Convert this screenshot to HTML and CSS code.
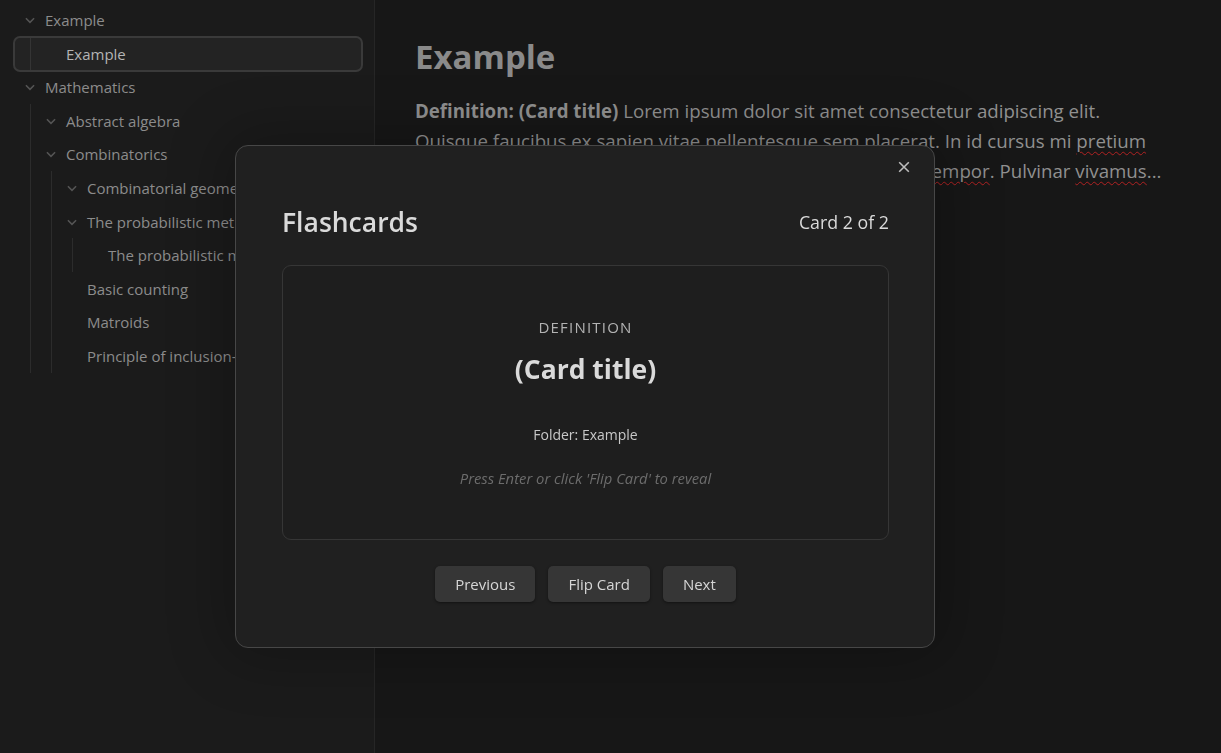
FILE: index.html
```html
<!DOCTYPE html>
<html lang="en">
<head>
<meta charset="utf-8">
<title>Flashcards</title>
<link rel="stylesheet" href="styles.css">
</head>
<body>
<div class="app">
  <aside class="sidebar">
    <div class="tree">
      <div class="row"><span class="chev"><svg viewBox="0 0 12 12"><path d="M2.5 4.5 L6 8 L9.5 4.5"/></svg></span><span class="label">Example</span></div>
      <div class="children">
        <div class="row leaf selected"><span class="label">Example</span></div>
      </div>
      <div class="row"><span class="chev"><svg viewBox="0 0 12 12"><path d="M2.5 4.5 L6 8 L9.5 4.5"/></svg></span><span class="label">Mathematics</span></div>
      <div class="children">
        <div class="row"><span class="chev"><svg viewBox="0 0 12 12"><path d="M2.5 4.5 L6 8 L9.5 4.5"/></svg></span><span class="label">Abstract algebra</span></div>
        <div class="row"><span class="chev"><svg viewBox="0 0 12 12"><path d="M2.5 4.5 L6 8 L9.5 4.5"/></svg></span><span class="label">Combinatorics</span></div>
        <div class="children">
          <div class="row"><span class="chev"><svg viewBox="0 0 12 12"><path d="M2.5 4.5 L6 8 L9.5 4.5"/></svg></span><span class="label">Combinatorial geometry</span></div>
          <div class="row"><span class="chev"><svg viewBox="0 0 12 12"><path d="M2.5 4.5 L6 8 L9.5 4.5"/></svg></span><span class="label">The probabilistic method</span></div>
          <div class="children">
            <div class="row leaf"><span class="label">The probabilistic method</span></div>
          </div>
          <div class="row leaf"><span class="label">Basic counting</span></div>
          <div class="row leaf"><span class="label">Matroids</span></div>
          <div class="row leaf"><span class="label">Principle of inclusion-exclusion</span></div>
        </div>
      </div>
    </div>
  </aside>
  <main class="content">
    <h1 class="title">Example</h1>
    <p class="para"><b>Definition: (Card title)</b> Lorem ipsum dolor sit amet consectetur adipiscing elit.<br>Quisque faucibus ex sapien vitae pellentesque sem placerat. In id cursus mi <span class="typo">pretium</span><br>tellus duis convallis. Tempus leo eu aenean sed diam urna <span class="typo">tempor</span>. Pulvinar <span class="typo">vivamus</span>...</p>
  </main>
</div>

<div class="modal">
  <button class="close" aria-label="Close"><svg viewBox="0 0 16 16"><path d="M2.5 2.5 L13.5 13.5 M13.5 2.5 L2.5 13.5"/></svg></button>
  <div class="modal-head">
    <h2 class="modal-title">Flashcards</h2>
    <span class="counter">Card 2 of 2</span>
  </div>
  <div class="card">
    <div class="kind">DEFINITION</div>
    <div class="card-title">(Card title)</div>
    <div class="folder">Folder: Example</div>
    <div class="hint">Press Enter or click 'Flip Card' to reveal</div>
  </div>
  <div class="actions">
    <button class="btn">Previous</button>
    <button class="btn">Flip Card</button>
    <button class="btn">Next</button>
  </div>
</div>
</body>
</html>
```

FILE: styles.css
```css
html, body {
  margin: 0;
  padding: 0;
  height: 100%;
  overflow: hidden;
}
body {
  font-family: "Open Sans", "Noto Sans", sans-serif;
  background: #171717;
}
.app {
  display: flex;
  height: 753px;
}
.sidebar {
  width: 375px;
  flex: none;
  background: #1b1b1b;
  border-right: 1px solid #262626;
  padding: 3.5px 13px 0 0;
  box-sizing: border-box;
}
.tree {
  display: flex;
  flex-direction: column;
}
.row {
  height: 33.55px;
  display: flex;
  align-items: center;
  color: #8c8c8c;
  font-size: 15px;
  white-space: nowrap;
  position: relative;
  margin-left: 20px;
}
.children .row { margin-left: 0; }
.chev {
  width: 20px;
  height: 20px;
  flex: none;
  display: flex;
  align-items: center;
  justify-content: center;
  margin-right: 5px;
}
.chev svg {
  width: 14px;
  height: 14px;
  fill: none;
  stroke: #555;
  stroke-width: 1.3;
}
.leaf { padding-left: 25px; }
.children {
  margin-left: 30px;
  border-left: 1px solid #2c2c2c;
  padding-left: 10px;
  display: flex;
  flex-direction: column;
}
.children .children { margin-left: 10px; }
.selected { color: #b4b4b4; }
.selected::before {
  content: "";
  position: absolute;
  left: -28px;
  right: -2px;
  top: -1px;
  bottom: -1px;
  border: 2px solid #3a3a3a;
  border-radius: 7px;
  background: rgba(255,255,255,0.04);
}
.label { position: relative; }
.content {
  flex: 1;
  background: #171717;
  padding: 35px 40px;
}
.title {
  margin: 0 0 17px;
  font-size: 33px;
  font-weight: 700;
  color: #8a8a8a;
  line-height: 44px;
}
.para {
  margin: 0;
  font-size: 18.7px;
  line-height: 30px;
  color: #909090;
  white-space: nowrap;
}
.para b { color: #909090; font-weight: 700; }
.typo {
  text-decoration: underline wavy #b02222;
  text-decoration-thickness: 1px;
  text-underline-offset: 3px;
}
.modal {
  position: fixed;
  left: 235px;
  top: 145px;
  width: 700px;
  height: 503px;
  box-sizing: border-box;
  background: #202020;
  border: 1px solid #474747;
  border-radius: 13px;
  box-shadow: 0 0 60px 10px rgba(0,0,0,0.24);
  padding: 58px 45px 0 46px;
  display: flex;
  flex-direction: column;
}
.close {
  position: absolute;
  top: 10px;
  right: 19px;
  width: 22px;
  height: 22px;
  padding: 0;
  border: 0;
  background: transparent;
  display: flex;
  align-items: center;
  justify-content: center;
}
.close svg {
  width: 14px;
  height: 14px;
  fill: none;
  stroke: #bdbdbd;
  stroke-width: 1.8;
}
.modal-head {
  display: flex;
  justify-content: space-between;
  align-items: center;
  height: 36px;
}
.modal-title {
  margin: 0;
  font-size: 26.5px;
  font-weight: 600;
  color: #dadada;
}
.counter {
  font-size: 17.8px;
  color: #dadada;
}
.card {
  margin-top: 25px;
  height: 275px;
  box-sizing: border-box;
  border: 1px solid #363636;
  border-radius: 9px;
  background: #1e1e1e;
  display: flex;
  flex-direction: column;
  align-items: center;
  padding-top: 50px;
}
.kind {
  font-size: 15px;
  letter-spacing: 1.2px;
  color: #b3b3b3;
  line-height: 22px;
}
.card-title {
  margin-top: 13px;
  font-size: 26.5px;
  font-weight: 700;
  color: #dadada;
  line-height: 36px;
}
.folder {
  margin-top: 38px;
  font-size: 14px;
  color: #c8c8c8;
  line-height: 20px;
}
.hint {
  margin-top: 23px;
  font-size: 14.8px;
  font-style: italic;
  color: #6c6c6c;
  line-height: 20px;
}
.actions {
  display: flex;
  justify-content: center;
  gap: 13px;
  margin-top: 26px;
}
.btn {
  height: 36px;
  padding: 0 20px;
  font-family: inherit;
  font-size: 15px;
  color: #d6d6d6;
  background: #363636;
  border: 0;
  border-radius: 5px;
  box-shadow: 0 1px 3px rgba(0,0,0,0.45);
}
```
